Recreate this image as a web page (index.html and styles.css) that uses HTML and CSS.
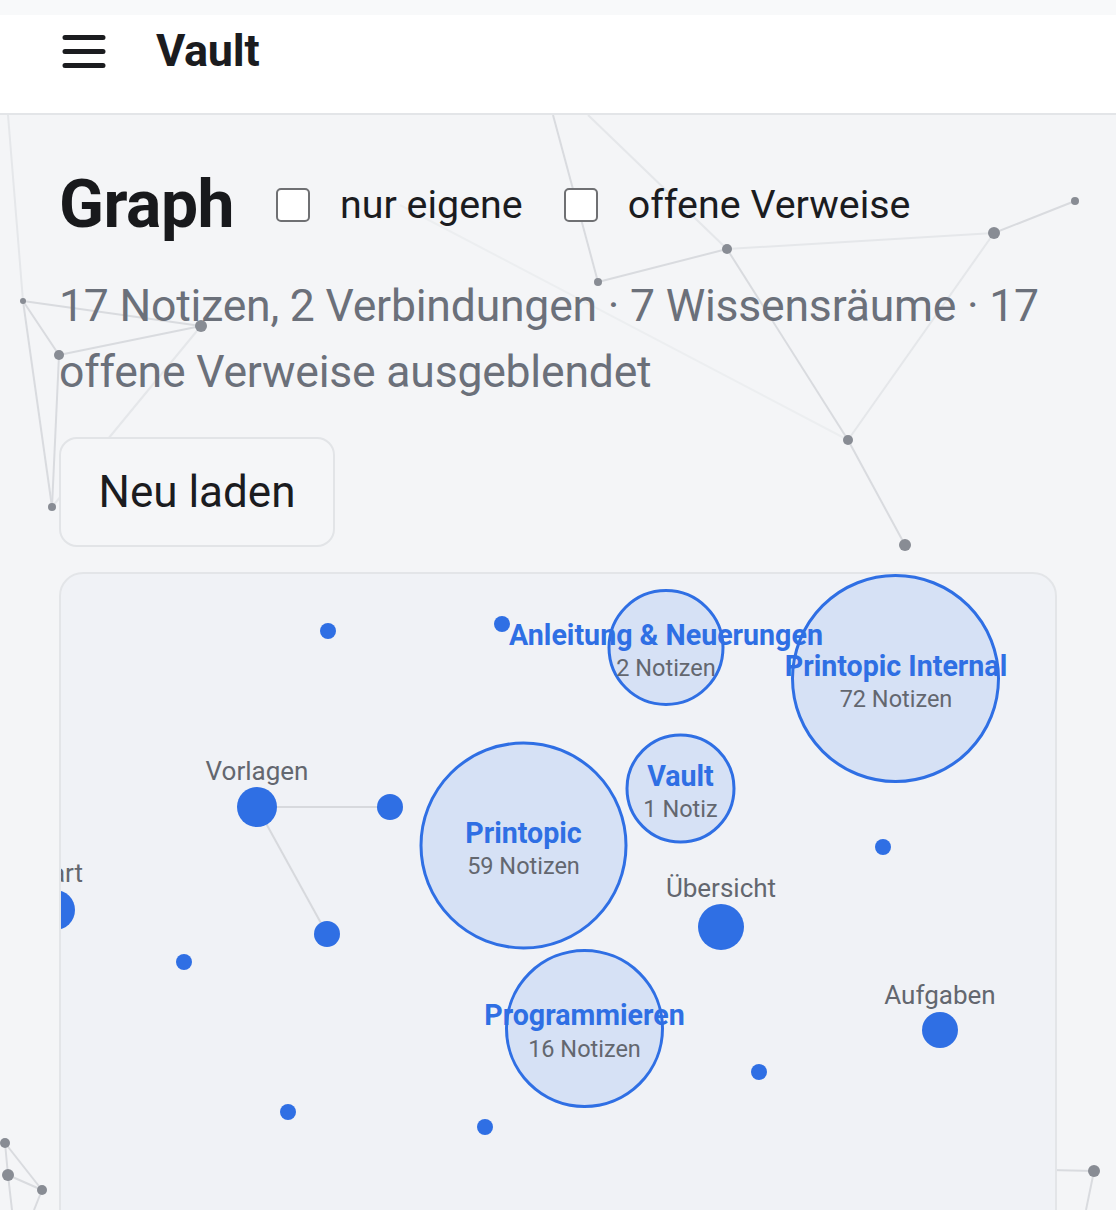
FILE: index.html
```html
<!DOCTYPE html>
<html lang="de">
<head>
<meta charset="utf-8">
<title>Vault – Graph</title>
<link rel="stylesheet" href="styles.css">
</head>
<body>
<svg class="backdrop" width="1116" height="1210" viewBox="0 0 1116 1210" aria-hidden="true">
  <g class="bg-edges">
    <line class="faint" x1="8" y1="115" x2="23" y2="301"/>
    <line x1="23" y1="301" x2="201" y2="326"/>
    <line x1="23" y1="301" x2="59" y2="355"/>
    <line x1="59" y1="355" x2="201" y2="326"/>
    <line x1="23" y1="301" x2="52" y2="507"/>
    <line x1="59" y1="355" x2="52" y2="507"/>
    <line class="faint" x1="201" y1="326" x2="52" y2="507"/>
    <line x1="553" y1="115" x2="598" y2="282"/>
    <line class="faint" x1="588" y1="115" x2="727" y2="249"/>
    <line x1="598" y1="282" x2="727" y2="249"/>
    <line class="faint" x1="727" y1="249" x2="994" y2="233"/>
    <line x1="994" y1="233" x2="1075" y2="201"/>
    <line x1="727" y1="249" x2="848" y2="440"/>
    <line class="faint" x1="994" y1="233" x2="848" y2="440"/>
    <line class="ghost" x1="400" y1="205" x2="848" y2="440"/>
    <line x1="848" y1="440" x2="905" y2="545"/>
    <line x1="5" y1="1143" x2="8" y2="1175"/>
    <line x1="5" y1="1143" x2="42" y2="1190"/>
    <line x1="8" y1="1175" x2="42" y2="1190"/>
    <line x1="8" y1="1175" x2="12" y2="1210"/>
    <line x1="42" y1="1190" x2="34" y2="1210"/>
    <line x1="1050" y1="1170" x2="1094" y2="1171"/>
    <line x1="1094" y1="1171" x2="1086" y2="1210"/>
  </g>
  <g class="bg-nodes">
    <circle cx="23" cy="301" r="3"/>
    <circle cx="59" cy="355" r="5"/>
    <circle cx="201" cy="326" r="6"/>
    <circle cx="52" cy="507" r="4"/>
    <circle cx="598" cy="282" r="4"/>
    <circle cx="727" cy="249" r="5"/>
    <circle cx="994" cy="233" r="6"/>
    <circle cx="1075" cy="201" r="4"/>
    <circle cx="848" cy="440" r="5"/>
    <circle cx="905" cy="545" r="6"/>
    <circle cx="5" cy="1143" r="5"/>
    <circle cx="8" cy="1175" r="6"/>
    <circle cx="42" cy="1190" r="5"/>
    <circle cx="1094" cy="1171" r="6"/>
  </g>
</svg>

<header class="topbar">
  <button class="menu-btn" type="button" aria-label="Menü">
    <svg width="44" height="44" viewBox="0 0 44 44">
      <path d="M3 9.5H41M3 23.5H41M3 37.5H41" stroke="#1b1c1f" stroke-width="5" stroke-linecap="round" fill="none"/>
    </svg>
  </button>
  <span class="brand">Vault</span>
</header>

<main class="page">
  <div class="title-row">
    <h1 class="title">Graph</h1>
    <label class="toggle"><input type="checkbox" class="check"><span>nur eigene</span></label>
    <label class="toggle"><input type="checkbox" class="check"><span>offene Verweise</span></label>
  </div>
  <p class="stats">17 Notizen, 2 Verbindungen · 7 Wissensräume · 17 offene Verweise ausgeblendet</p>
  <button class="reload" type="button">Neu laden</button>

  <section class="graph">
    <svg class="graph-canvas" width="994" height="680" viewBox="61 574 994 680">
      <g class="edges">
        <line x1="257" y1="807" x2="390" y2="807"/>
        <line x1="257" y1="807" x2="327" y2="934"/>
      </g>
      <g class="clusters">
        <circle cx="666" cy="647.5" r="57"/>
        <circle cx="895.5" cy="678.5" r="103"/>
        <circle cx="523.5" cy="845.5" r="102.5"/>
        <circle cx="680.5" cy="788.5" r="53.5"/>
        <circle cx="584.5" cy="1028.5" r="78"/>
      </g>
      <g class="nodes">
        <circle cx="328" cy="631" r="8"/>
        <circle cx="502" cy="624" r="8"/>
        <circle cx="257" cy="807" r="20"/>
        <circle cx="390" cy="807" r="13"/>
        <circle cx="327" cy="934" r="13"/>
        <circle cx="55" cy="910" r="20"/>
        <circle cx="883" cy="847" r="8"/>
        <circle cx="721" cy="927" r="23"/>
        <circle cx="184" cy="962" r="8"/>
        <circle cx="940" cy="1030" r="18"/>
        <circle cx="759" cy="1072" r="8"/>
        <circle cx="288" cy="1112" r="8"/>
        <circle cx="485" cy="1127" r="8"/>
      </g>
      <g class="node-labels">
        <text x="257" y="780">Vorlagen</text>
        <text x="55" y="882">Start</text>
        <text x="721" y="897">Übersicht</text>
        <text x="940" y="1004">Aufgaben</text>
      </g>
      <g class="cluster-labels">
        <text class="c-title" x="666" y="645">Anleitung &amp; Neuerungen</text>
        <text class="c-count" x="666" y="676">2 Notizen</text>
        <text class="c-title" x="896" y="676">Printopic Internal</text>
        <text class="c-count" x="896" y="707">72 Notizen</text>
        <text class="c-title" x="523.5" y="843">Printopic</text>
        <text class="c-count" x="523.5" y="874">59 Notizen</text>
        <text class="c-title" x="680.5" y="786">Vault</text>
        <text class="c-count" x="680.5" y="817">1 Notiz</text>
        <text class="c-title" x="584.5" y="1025">Programmieren</text>
        <text class="c-count" x="584.5" y="1057">16 Notizen</text>
      </g>
    </svg>
  </section>
</main>
</body>
</html>
```
FILE: styles.css
```css
* {
  box-sizing: border-box;
}

html, body {
  margin: 0;
  padding: 0;
}

body {
  position: relative;
  width: 1116px;
  height: 1210px;
  overflow: hidden;
  background: #f4f5f7;
  font-family: Roboto, "Noto Sans", "Liberation Sans", sans-serif;
  color: #1b1c1f;
}

.backdrop {
  position: absolute;
  top: 0;
  left: 0;
  z-index: 0;
}

.bg-edges line {
  stroke: #d9dbdf;
  stroke-width: 2;
}

.bg-edges line.faint {
  stroke: #e5e7ea;
}

.bg-edges line.ghost {
  stroke: #eceef0;
}

.bg-nodes circle {
  fill: #888c94;
}

.topbar {
  position: relative;
  z-index: 2;
  display: flex;
  align-items: flex-start;
  gap: 50px;
  height: 115px;
  padding: 12px 0 0 62px;
  background: #ffffff;
  border-top: 15px solid #f8f9fa;
  border-bottom: 2px solid #e3e5e8;
}

.menu-btn {
  display: flex;
  padding: 0;
  margin-top: 1px;
  border: 0;
  background: none;
}

.brand {
  font-size: 45px;
  line-height: 45px;
  font-weight: 700;
  letter-spacing: -0.3px;
  color: #1b1c1f;
  margin-top: 1px;
}

.page {
  position: relative;
  z-index: 1;
  padding: 50px 59px 0 59px;
}

.title-row {
  display: flex;
  align-items: center;
}

.title {
  margin: 0 42px 0 0;
  font-size: 66px;
  line-height: 79px;
  font-weight: 700;
  letter-spacing: -0.5px;
  color: #18191c;
}

.toggle {
  display: flex;
  align-items: center;
  gap: 30px;
  margin-right: 41px;
  font-size: 39.4px;
  line-height: 48px;
  color: #1b1c1f;
}

.check {
  appearance: none;
  -webkit-appearance: none;
  width: 34px;
  height: 34px;
  margin: 0;
  border: 2px solid #6f7073;
  border-radius: 5px;
  background: #ffffff;
}

.stats {
  margin: 29px 0 0 0;
  font-size: 44.5px;
  letter-spacing: -0.2px;
  line-height: 66px;
  color: #6b707a;
}

.reload {
  display: block;
  margin-top: 32px;
  width: 276px;
  height: 110px;
  padding: 0;
  border: 2px solid #e2e4e7;
  border-radius: 18px;
  background: #f5f6f8;
  font-family: Roboto, "Noto Sans", "Liberation Sans", sans-serif;
  font-size: 44px;
  color: #1b1c1f;
}

.graph {
  margin-top: 25px;
  height: 690px;
  border: 2px solid #e3e5e8;
  border-radius: 24px;
  background: #f0f2f6;
  overflow: hidden;
}

.graph-canvas {
  display: block;
}

.edges line {
  stroke: #d7d9dd;
  stroke-width: 2;
}

.clusters circle {
  fill: #d6e1f5;
  stroke: #2f6fe4;
  stroke-width: 3;
}

.nodes circle {
  fill: #2f6fe4;
}

.node-labels text {
  font-family: Roboto, "Noto Sans", "Liberation Sans", sans-serif;
  font-size: 26px;
  fill: #63676f;
  text-anchor: middle;
}

.cluster-labels text {
  font-family: Roboto, "Noto Sans", "Liberation Sans", sans-serif;
  text-anchor: middle;
}

.cluster-labels .c-title {
  font-size: 28.6px;
  font-weight: 700;
  fill: #2f6fe4;
}

.cluster-labels .c-count {
  font-size: 23.5px;
  fill: #63676f;
}
```
